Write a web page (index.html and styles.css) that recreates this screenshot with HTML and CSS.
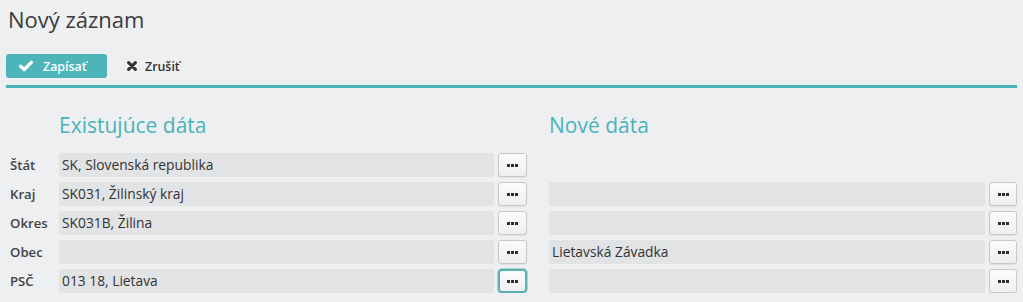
FILE: index.html
```html
<!DOCTYPE html>
<html lang="sk">
<head>
<meta charset="utf-8">
<title>Nový záznam</title>
<link rel="stylesheet" href="styles.css">
</head>
<body>
<div class="page">
  <h1 class="title">Nový záznam</h1>
  <div class="toolbar">
    <button class="btn btn-primary" type="button">
      <svg class="ico" width="14" height="12" viewBox="0 0 14 12"><path d="M1.6 6.2 L5.2 9.5 L12.4 2.3" fill="none" stroke="#fff" stroke-width="3.2" stroke-linecap="round" stroke-linejoin="round"/></svg>
      <span>Zapísať</span>
    </button>
    <button class="btn btn-plain" type="button">
      <svg class="ico" width="10" height="10" viewBox="0 0 10 10"><path d="M1.6 1.6 L8.4 8.4 M8.4 1.6 L1.6 8.4" fill="none" stroke="#333" stroke-width="3" stroke-linecap="round"/></svg>
      <span>Zrušiť</span>
    </button>
  </div>

  <div class="heads">
    <h2 class="sec sec-old">Existujúce dáta</h2>
    <h2 class="sec sec-new">Nové dáta</h2>
  </div>

  <div class="rows">
    <div class="row">
      <label class="lbl">Štát</label>
      <div class="inp inp-old">SK, Slovenská republika</div>
      <button class="dots" type="button"><i></i><i></i><i></i></button>
      <div class="gap"></div>
      <div class="empty"></div>
    </div>
    <div class="row">
      <label class="lbl">Kraj</label>
      <div class="inp inp-old">SK031, Žilinský kraj</div>
      <button class="dots" type="button"><i></i><i></i><i></i></button>
      <div class="gap"></div>
      <div class="inp inp-new"></div>
      <button class="dots dots-r" type="button"><i></i><i></i><i></i></button>
    </div>
    <div class="row">
      <label class="lbl">Okres</label>
      <div class="inp inp-old">SK031B, Žilina</div>
      <button class="dots" type="button"><i></i><i></i><i></i></button>
      <div class="gap"></div>
      <div class="inp inp-new"></div>
      <button class="dots dots-r" type="button"><i></i><i></i><i></i></button>
    </div>
    <div class="row">
      <label class="lbl">Obec</label>
      <div class="inp inp-old"></div>
      <button class="dots" type="button"><i></i><i></i><i></i></button>
      <div class="gap"></div>
      <div class="inp inp-new">Lietavská Závadka</div>
      <button class="dots dots-r" type="button"><i></i><i></i><i></i></button>
    </div>
    <div class="row">
      <label class="lbl">PSČ</label>
      <div class="inp inp-old">013 18, Lietava</div>
      <button class="dots focus" type="button"><i></i><i></i><i></i></button>
      <div class="gap"></div>
      <div class="inp inp-new"></div>
      <button class="dots dots-r" type="button"><i></i><i></i><i></i></button>
    </div>
  </div>
</div>
</body>
</html>
```
FILE: styles.css
```css
* { box-sizing: border-box; }
html, body {
  margin: 0;
  padding: 0;
  background: #eeeff1;
}
body {
  font-family: "Open Sans", "Noto Sans", sans-serif;
  font-size: 13px;
  color: #333;
}
.page {
  padding: 5px 6px 0 6px;
  width: 1023px;
}
.title {
  margin: 0 0 0 2px;
  font-size: 22px;
  line-height: 28px;
  font-weight: 500;
  color: #3b3b3b;
}
.toolbar {
  display: flex;
  align-items: center;
  gap: 14px;
  margin-top: 21px;
  padding-bottom: 7px;
  border-bottom: 3px solid #4ab3b8;
  width: 1011px;
}
.btn {
  display: flex;
  align-items: center;
  height: 24px;
  border: 0;
  font-family: inherit;
  font-size: 12.4px;
  font-weight: 600;
  cursor: pointer;
}
.btn-primary {
  width: 101px;
  padding: 0 0 0 13px;
  gap: 10px;
  background: #4db5ba;
  color: #fff;
  border-radius: 3px;
}
.btn-plain {
  background: transparent;
  padding: 0 0 0 6px;
  gap: 8px;
  color: #333;
}
.ico { display: block; flex: none; }
.heads {
  display: flex;
  margin-top: 23px;
  height: 28px;
}
.sec {
  margin: 0;
  font-size: 21px;
  line-height: 28px;
  font-weight: 500;
  color: #4ab3b8;
}
.sec-old { margin-left: 53px; width: 490px; }
.rows {
  display: flex;
  flex-direction: column;
  gap: 5px;
  margin-top: 14px;
}
.row {
  display: flex;
  align-items: center;
  height: 24px;
}
.lbl {
  width: 53px;
  padding-left: 4px;
  font-size: 13.2px;
  font-weight: 600;
  color: #444;
}
.inp {
  height: 24px;
  line-height: 24px;
  padding-left: 3px;
  background: #e2e3e5;
  border-radius: 2px;
  color: #333;
  font-size: 13.8px;
  white-space: nowrap;
}
.inp-old { width: 435px; }
.inp-new { width: 436px; }
.gap { width: 22px; }
.dots {
  display: flex;
  align-items: center;
  justify-content: center;
  gap: 1px;
  width: 29px;
  height: 24px;
  margin-left: 4px;
  padding: 0;
  background: linear-gradient(#fbfbfb, #efefef);
  border: 1px solid #c6c7c9;
  border-radius: 3px;
  box-shadow: 0 1px 1px rgba(0,0,0,0.06);
  cursor: pointer;
}
.dots-r { width: 28px; }
.dots i {
  display: block;
  width: 3px;
  height: 3px;
  background: #2e2e2e;
}
.dots.focus {
  border: 2px solid #5ab0b3;
  border-radius: 4px;
  box-shadow: 0 0 0 1px #a9d6d8;
}
```
